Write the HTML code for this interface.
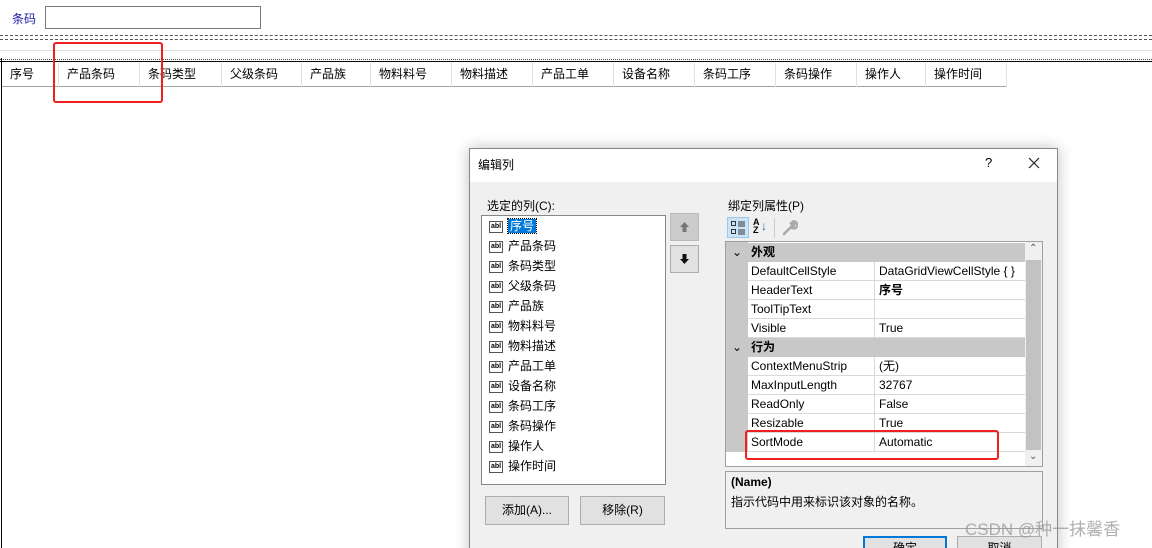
<!DOCTYPE html>
<html><head><meta charset="utf-8"><style>
*{margin:0;padding:0;box-sizing:border-box}
html,body{width:1152px;height:548px;overflow:hidden}
body{background:#fff;position:relative;font-family:"Liberation Sans","Microsoft YaHei","Noto Sans CJK SC",sans-serif;font-size:12px;color:#000}
.a{position:absolute}
.hc{position:absolute;top:63px;height:24px;line-height:22px;padding-left:8px;border-right:1px solid #e0e0e0;font-size:12px}
.li{position:absolute;left:489px;height:20px;line-height:20px;font-size:12px}
.ic{display:inline-block;width:14px;height:12px;border:1px solid #555;font-size:7px;line-height:9px;text-align:center;vertical-align:middle;margin-right:5px;font-weight:bold;background:#fff}
.pr{position:absolute;left:748px;width:277px;height:19px;border-bottom:1px solid #d9d9d9;background:#fff;font-size:12px;line-height:18px}
.pr span{position:absolute;left:3px}
.pr b{position:absolute;left:131px;font-weight:normal}
.pr i{position:absolute;left:126px;top:0;bottom:0;border-left:1px solid #d9d9d9}
.cat{position:absolute;left:726px;width:299px;height:19px;background:#c8c8c8;font-weight:bold;line-height:18px;font-size:12px}
.btn{position:absolute;background:#e1e1e1;border:1px solid #adadad;text-align:center;font-size:12px}
</style></head><body>
<div class="a" style="left:12px;top:10px;color:#1a1aa8;font-size:12px">条码</div>
<div class="a" style="left:45px;top:6px;width:216px;height:23px;border:1px solid #7a7a7a"></div>
<div class="a" style="left:0;top:35px;width:1152px;border-top:1px dashed #555"></div>
<div class="a" style="left:0;top:39px;width:1152px;border-top:1px dashed #555"></div>
<div class="a" style="left:0;top:50px;width:1152px;border-top:1px solid #ddd"></div>
<div class="a" style="left:0;top:59px;width:1152px;border-top:1px dotted #444"></div>
<div class="a" style="left:0;top:61px;width:1152px;border-top:1px solid #000"></div>
<div class="a" style="left:1px;top:58px;height:490px;border-left:1px solid #000"></div>
<div class="a" style="left:2px;top:62px;width:1005px;height:25px;border-bottom:1px solid #a0a0a0"></div>
<div class="hc" style="left:2px;width:57px">序号</div>
<div class="hc" style="left:59px;width:81px">产品条码</div>
<div class="hc" style="left:140px;width:82px">条码类型</div>
<div class="hc" style="left:222px;width:80px">父级条码</div>
<div class="hc" style="left:302px;width:69px">产品族</div>
<div class="hc" style="left:371px;width:81px">物料料号</div>
<div class="hc" style="left:452px;width:81px">物料描述</div>
<div class="hc" style="left:533px;width:81px">产品工单</div>
<div class="hc" style="left:614px;width:81px">设备名称</div>
<div class="hc" style="left:695px;width:81px">条码工序</div>
<div class="hc" style="left:776px;width:81px">条码操作</div>
<div class="hc" style="left:857px;width:69px">操作人</div>
<div class="hc" style="left:926px;width:81px">操作时间</div>
<div class="a" style="left:53px;top:42px;width:110px;height:61px;border:2px solid #f02020;border-radius:3px"></div>

<div class="a" style="left:469px;top:148px;width:589px;height:410px;background:#f0f0f0;border:1px solid #888;box-shadow:0 0 14px rgba(0,0,0,.25)"></div>
<div class="a" style="left:470px;top:149px;width:587px;height:33px;background:#fff"></div>
<div class="a" style="left:478px;top:156px">编辑列</div>
<div class="a" style="left:985px;top:155px;font-size:13px">?</div>
<svg class="a" style="left:1028px;top:157px" width="12" height="12"><path d="M1 1L11 11M11 1L1 11" stroke="#222" stroke-width="1.2"/></svg>
<div class="a" style="left:487px;top:197px">选定的列(C):</div>
<div class="a" style="left:481px;top:215px;width:185px;height:270px;background:#fff;border:1px solid #828790"></div>
<div class="li" style="top:216px"><span class="ic">abl</span><span style="background:#0078d7;color:#fff;outline:1px dotted #000;padding:0 2px">序号</span></div>
<div class="li" style="top:236px"><span class="ic">abl</span>产品条码</div>
<div class="li" style="top:256px"><span class="ic">abl</span>条码类型</div>
<div class="li" style="top:276px"><span class="ic">abl</span>父级条码</div>
<div class="li" style="top:296px"><span class="ic">abl</span>产品族</div>
<div class="li" style="top:316px"><span class="ic">abl</span>物料料号</div>
<div class="li" style="top:336px"><span class="ic">abl</span>物料描述</div>
<div class="li" style="top:356px"><span class="ic">abl</span>产品工单</div>
<div class="li" style="top:376px"><span class="ic">abl</span>设备名称</div>
<div class="li" style="top:396px"><span class="ic">abl</span>条码工序</div>
<div class="li" style="top:416px"><span class="ic">abl</span>条码操作</div>
<div class="li" style="top:436px"><span class="ic">abl</span>操作人</div>
<div class="li" style="top:456px"><span class="ic">abl</span>操作时间</div>
<div class="btn" style="left:670px;top:213px;width:29px;height:28px;background:#ccc;border-color:#bbb"></div>
<svg class="a" style="left:679px;top:221px" width="11" height="12"><path d="M5.5 1L10 6H7.5V11H3.5V6H1Z" fill="#777"/></svg>
<div class="btn" style="left:670px;top:245px;width:29px;height:28px"></div>
<svg class="a" style="left:679px;top:253px" width="11" height="12"><path d="M5.5 11L10 6H7.5V1H3.5V6H1Z" fill="#111"/></svg>
<div class="btn" style="left:485px;top:496px;width:84px;height:29px;line-height:27px">添加(A)...</div>
<div class="btn" style="left:580px;top:496px;width:85px;height:29px;line-height:27px">移除(R)</div>

<div class="a" style="left:728px;top:197px">绑定列属性(P)</div>
<div class="a" style="left:727px;top:217px;width:22px;height:21px;background:#cce4f7;border:1px solid #99c9ef"></div>
<svg class="a" style="left:730px;top:220px" width="16" height="15"><g fill="none" stroke="#333"><rect x="1.5" y="1.5" width="4" height="4"/><rect x="1.5" y="9.5" width="4" height="4"/></g><g stroke="#333"><path d="M8 2h7M8 4h7M8 6h7M8 10h7M8 12h7M8 14h7"/></g></svg>
<div class="a" style="left:753px;top:218px;font-size:9px;font-weight:bold;line-height:8px">A<br>Z</div>
<div class="a" style="left:761px;top:219px;color:#1a6fc0;font-weight:bold">↓</div>
<div class="a" style="left:774px;top:218px;height:20px;border-left:1px solid #ccc"></div>
<svg class="a" style="left:781px;top:219px" width="17" height="17"><path d="M3 15L10 8M10 8a3.5 3.5 0 1 0 2-5.5l-2 2 1.5 1.5 2-2A3.5 3.5 0 0 1 10 8" stroke="#aaa" stroke-width="2.5" fill="none" stroke-linecap="round"/></svg>
<div class="a" style="left:725px;top:241px;width:318px;height:226px;background:#fff;border:1px solid #a0a0a0"></div>
<div class="a" style="left:726px;top:242px;width:22px;height:210px;background:#c8c8c8"></div>
<div class="cat" style="top:243px"><span style="position:absolute;left:6px;font-weight:normal">⌄</span><span style="position:absolute;left:25px">外观</span></div>
<div class="pr" style="top:262px"><span>DefaultCellStyle</span><i></i><b>DataGridViewCellStyle { }</b></div>
<div class="pr" style="top:281px"><span>HeaderText</span><i></i><b style="font-weight:bold">序号</b></div>
<div class="pr" style="top:300px"><span>ToolTipText</span><i></i></div>
<div class="pr" style="top:319px"><span>Visible</span><i></i><b>True</b></div>
<div class="cat" style="top:338px"><span style="position:absolute;left:6px;font-weight:normal">⌄</span><span style="position:absolute;left:25px">行为</span></div>
<div class="pr" style="top:357px"><span>ContextMenuStrip</span><i></i><b>(无)</b></div>
<div class="pr" style="top:376px"><span>MaxInputLength</span><i></i><b>32767</b></div>
<div class="pr" style="top:395px"><span>ReadOnly</span><i></i><b>False</b></div>
<div class="pr" style="top:414px"><span>Resizable</span><i></i><b>True</b></div>
<div class="pr" style="top:433px"><span>SortMode</span><i></i><b>Automatic</b></div>
<div class="a" style="left:1025px;top:242px;width:17px;height:224px;background:#f0f0f0"></div>
<div class="a" style="left:1026px;top:260px;width:15px;height:190px;background:#c2c2c2"></div>
<div class="a" style="left:1029px;top:243px;font-size:10px;color:#555">⌃</div>
<div class="a" style="left:1029px;top:451px;font-size:10px;color:#555">⌄</div>
<div class="a" style="left:745px;top:430px;width:254px;height:30px;border:2px solid #f02020;border-radius:3px"></div>
<div class="a" style="left:725px;top:471px;width:318px;height:58px;border:1px solid #a0a0a0"></div>
<div class="a" style="left:731px;top:475px;font-weight:bold">(Name)</div>
<div class="a" style="left:731px;top:493px">指示代码中用来标识该对象的名称。</div>
<div class="btn" style="left:863px;top:536px;width:84px;height:24px;border:2px solid #0078d7;line-height:20px">确定</div>
<div class="btn" style="left:957px;top:536px;width:85px;height:24px;line-height:22px">取消</div>
<div class="a" style="left:965px;top:515px;font-size:17px;color:rgba(150,150,150,.75)">CSDN @种一抹馨香</div>
</body></html>
